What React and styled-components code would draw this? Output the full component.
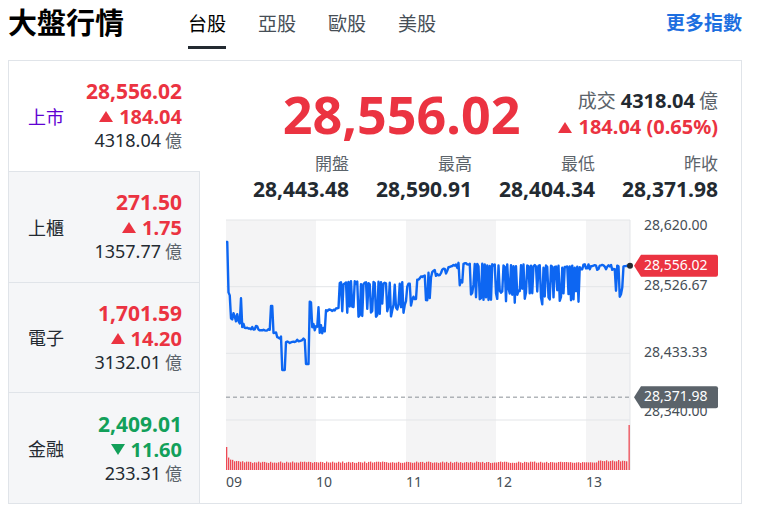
import React from 'react';
import styled, { createGlobalStyle } from 'styled-components';

const RED = '#eb3341';
const GREEN = '#12a05a';
const DARK = '#232a31';
const GRAY = '#5b636a';
const LINE = '#e0e4e9';

const GlobalStyle = createGlobalStyle`
  body {
    margin: 0;
    background: #fff;
    color: ${DARK};
    font-family: "Noto Sans", "Noto Sans CJK TC", sans-serif;
  }
`;

const Page = styled.div`
  width: 734px;
  padding: 0 18px 0 8px;
`;

const Header = styled.div`
  display: flex;
  align-items: flex-start;
  height: 60px;
`;

const Title = styled.h1`
  flex: 0 0 180px;
  margin: 0;
  font-size: 29px;
  line-height: 46px;
  font-weight: 700;
  color: #000;
`;

const Tabs = styled.div`
  display: flex;
  gap: 32px;
`;

const Tab = styled.div`
  padding: 11px 0 9px;
  font-size: 19px;
  line-height: 26px;
  color: ${(p) => (p.$active ? '#000' : '#464e56')};
  border-bottom: 3px solid ${(p) => (p.$active ? DARK : 'transparent')};
`;

const MoreLink = styled.a`
  margin-left: auto;
  font-size: 19px;
  line-height: 46px;
  font-weight: 700;
  color: #1d6fe0;
  text-decoration: none;
`;

const Card = styled.div`
  display: flex;
  height: 444px;
  box-sizing: border-box;
  border: 1px solid ${LINE};
`;

const Sidebar = styled.div`
  display: flex;
  flex-direction: column;
  width: 191px;
  flex: none;
`;

const MarketItem = styled.div`
  flex: 1;
  display: flex;
  align-items: center;
  justify-content: space-between;
  padding: 0 17px 0 19px;
  background: ${(p) => (p.$active ? '#fff' : '#f5f6f8')};
  border-top: ${(p) => (p.$first ? 'none' : `1px solid ${LINE}`)};
  border-right: 1px solid ${(p) => (p.$active ? '#fff' : LINE)};
`;

const ItemLabel = styled.div`
  font-size: 18px;
  color: ${(p) => (p.$active ? '#6001d2' : DARK)};
`;

const ItemValues = styled.div`
  display: flex;
  flex-direction: column;
  align-items: flex-end;
`;

const Price = styled.div`
  font-size: 21px;
  line-height: 25px;
  font-weight: 700;
  color: ${(p) => (p.$down ? GREEN : RED)};
`;

const ChangeRow = styled.div`
  display: flex;
  align-items: center;
  font-size: 20px;
  line-height: ${(p) => (p.$tall ? 26 : 25)}px;
  font-weight: 700;
  color: ${(p) => (p.$down ? GREEN : RED)};
`;

const Triangle = styled.span`
  width: 0;
  height: 0;
  margin-right: 6px;
  border-left: 7px solid transparent;
  border-right: 7px solid transparent;
  ${(p) => (p.$down ? 'border-top' : 'border-bottom')}: 11px solid ${(p) => (p.$down ? GREEN : RED)};
`;

const Volume = styled.div`
  font-size: 18px;
  line-height: 23px;
  color: ${DARK};
`;

const Unit = styled.span`
  margin-left: 4px;
  color: ${GRAY};
  font-size: 17px;
`;

const Main = styled.div`
  flex: 1;
  padding: 23px 25px 0 26px;
`;

const Summary = styled.div`
  display: flex;
  justify-content: flex-end;
  align-items: center;
  gap: 38px;
  height: 60px;
`;

const BigPrice = styled.div`
  font-size: 52px;
  line-height: 60px;
  font-weight: 700;
  color: ${RED};
`;

const SummaryRight = styled.div`
  display: flex;
  flex-direction: column;
  align-items: flex-end;
`;

const TradeLine = styled.div`
  font-size: 19px;
  line-height: 26px;
  color: ${GRAY};
`;

const Strong = styled.b`
  margin: 0 4px 0 5px;
  font-size: 20px;
  color: ${DARK};
`;

const Stats = styled.div`
  display: grid;
  grid-template-columns: repeat(4, 1fr);
  margin-top: 8px;
`;

const Stat = styled.div`
  display: flex;
  flex-direction: column;
  align-items: flex-end;
`;

const StatLabel = styled.div`
  font-size: 17px;
  line-height: 24px;
  color: ${GRAY};
`;

const StatValue = styled.div`
  font-size: 21px;
  line-height: 26px;
  font-weight: 700;
  color: ${DARK};
`;

const ChartSvg = styled.svg`
  display: block;
  margin-top: 9px;
  overflow: visible;
`;

const markets = [
  { name: '上市', price: '28,556.02', change: '184.04', volume: '4318.04' },
  { name: '上櫃', price: '271.50', change: '1.75', volume: '1357.77' },
  { name: '電子', price: '1,701.59', change: '14.20', volume: '3132.01' },
  { name: '金融', price: '2,409.01', change: '11.60', volume: '233.31', down: true },
];

const stats = [
  ['開盤', '28,443.48'],
  ['最高', '28,590.91'],
  ['最低', '28,404.34'],
  ['昨收', '28,371.98'],
];

function rng(seed) {
  return () => {
    seed = (seed + 0x6d2b79f5) | 0;
    let t = Math.imul(seed ^ (seed >>> 15), 1 | seed);
    t = (t + Math.imul(t ^ (t >>> 7), 61 | t)) ^ t;
    return ((t ^ (t >>> 14)) >>> 0) / 4294967296;
  };
}

// [x0, x1, hi0, hi1, lo0, lo1, flip, jitter]
const segs = [
  [0, 1.5, 22, 22, 22, 22, 0, 0],
  [1.5, 4, 70, 76, 70, 76, 0, 0],
  [4, 16, 74, 80, 98, 106, 0.55, 3],
  [16, 44, 104, 110, 108, 112, 0.3, 3],
  [44, 47, 86, 86, 86, 86, 0, 0],
  [47, 56, 112, 116, 116, 120, 0.3, 2],
  [56, 59, 150, 150, 150, 150, 0, 0],
  [59, 80, 122, 118, 124, 120, 0.3, 2],
  [80, 83, 144, 144, 144, 144, 0, 0],
  [83, 100, 82, 90, 108, 118, 0.45, 3],
  [100, 113, 86, 88, 92, 90, 0.3, 2],
  [113, 180, 62, 64, 98, 96, 0.6, 4],
  [180, 205, 66, 52, 88, 80, 0.25, 3],
  [205, 232, 52, 44, 58, 50, 0.3, 2],
  [232, 250, 43, 44, 70, 78, 0.5, 2],
  [250, 355, 45, 47, 82, 86, 0.62, 3],
  [355, 390, 45, 46, 50, 50, 0.3, 2],
  [390, 398, 46, 46, 80, 80, 0.5, 1],
  [398, 405, 46, 46, 46, 46, 0, 1],
];

const PLOT_W = 404;
const yOf = (v) => ((28620 - v) / 280) * 200;
const LAST_Y = yOf(28556.02);
const PREV_Y = yOf(28371.98);

function buildLine() {
  const r = rng(29);
  const pts = [];
  let low = false;
  for (let x = 0; x < PLOT_W; x += 1.25) {
    const s = segs.find((g) => x >= g[0] && x < g[1]) || segs[segs.length - 1];
    const k = (x - s[0]) / (s[1] - s[0]);
    const hi = s[2] + (s[3] - s[2]) * k;
    const lo = s[4] + (s[5] - s[4]) * k;
    if (r() < s[6]) low = !low;
    const y = low ? lo - r() * (lo - hi) * 0.4 : hi + (r() - 0.5) * s[7];
    pts.push(`${x.toFixed(2)},${y.toFixed(1)}`);
  }
  pts.push(`${PLOT_W},${LAST_Y.toFixed(1)}`);
  return pts.join(' ');
}

function buildBars() {
  const r = rng(5);
  const bars = [];
  for (let x = 0; x < PLOT_W - 2; x += 2) {
    let h = 7 + 6 * Math.exp(-x / 6) + r() * 1.5;
    if (x < 2) h = 23;
    if (x > 370) h += 1.5;
    bars.push([x, h]);
  }
  bars.push([PLOT_W - 1.5, 45]);
  return bars;
}

const linePoints = buildLine();
const bars = buildBars();

const yLabels = [
  ['28,620.00', 6],
  ['28,526.67', 66.7],
  ['28,433.33', 133.3],
  ['28,340.00', 192],
];

function Tag({ y, color, text }) {
  return (
    <g>
      <path
        d={`M${PLOT_W + 4} ${y} L${PLOT_W + 11} ${y - 11} H${PLOT_W + 86} a2 2 0 0 1 2 2 V${y + 9} a2 2 0 0 1 -2 2 H${PLOT_W + 11} Z`}
        fill={color}
      />
      <text x={PLOT_W + 14} y={y + 0.5} fill="#fff" fontSize="14" dominantBaseline="middle">
        {text}
      </text>
    </g>
  );
}

function Chart() {
  const bandFill = '#f4f4f5';
  return (
    <ChartSvg width="492" height="282" fontFamily='"Noto Sans", sans-serif'>
      <g transform="translate(0,9)">
        <rect x="0" y="0" width="90" height="250" fill={bandFill} />
        <rect x="180" y="0" width="90" height="250" fill={bandFill} />
        <rect x="360" y="0" width={PLOT_W - 360} height="250" fill={bandFill} />
        {[0, 66.7, 133.3, 200].map((y) => (
          <line key={y} x1="0" x2={PLOT_W} y1={y} y2={y} stroke="#e3e5e8" strokeWidth="1" />
        ))}
        <line x1={PLOT_W} x2={PLOT_W} y1="0" y2="250" stroke="#e3e5e8" />
        <line x1="0" x2={PLOT_W} y1={PREV_Y} y2={PREV_Y} stroke="#8a9096" strokeDasharray="4 3" />
        {bars.map(([x, h]) => (
          <rect key={x} x={x} y={250 - h} width="1.3" height={h} fill="#ee4a55" />
        ))}
        <polyline points={linePoints} fill="none" stroke="#0d66f2" strokeWidth="2.4" strokeLinejoin="round" />
        <circle cx={PLOT_W} cy={LAST_Y} r="3" fill="#232a31" />
        {yLabels.map(([t, y]) => (
          <text key={t} x={PLOT_W + 14} y={y} fill="#464e56" fontSize="14" dominantBaseline="middle">
            {t}
          </text>
        ))}
        <Tag y={LAST_Y} color="#eb3341" text="28,556.02" />
        <Tag y={PREV_Y} color="#5b636a" text="28,371.98" />
        {['09', '10', '11', '12', '13'].map((t, i) => (
          <text key={t} x={i * 90} y="263" fill="#464e56" fontSize="14" dominantBaseline="middle">
            {t}
          </text>
        ))}
      </g>
    </ChartSvg>
  );
}

export default function App() {
  return (
    <Page>
      <GlobalStyle />
      <Header>
        <Title>大盤行情</Title>
        <Tabs>
          <Tab $active>台股</Tab>
          <Tab>亞股</Tab>
          <Tab>歐股</Tab>
          <Tab>美股</Tab>
        </Tabs>
        <MoreLink href="#">更多指數</MoreLink>
      </Header>
      <Card>
        <Sidebar>
          {markets.map((m, i) => (
            <MarketItem key={m.name} $active={i === 0} $first={i === 0}>
              <ItemLabel $active={i === 0}>{m.name}</ItemLabel>
              <ItemValues>
                <Price $down={m.down}>{m.price}</Price>
                <ChangeRow $down={m.down}>
                  <Triangle $down={m.down} />
                  {m.change}
                </ChangeRow>
                <Volume>
                  {m.volume}
                  <Unit>億</Unit>
                </Volume>
              </ItemValues>
            </MarketItem>
          ))}
        </Sidebar>
        <Main>
          <Summary>
            <BigPrice>28,556.02</BigPrice>
            <SummaryRight>
              <TradeLine>
                成交<Strong>4318.04</Strong>億
              </TradeLine>
              <ChangeRow $tall>
                <Triangle />
                184.04 (0.65%)
              </ChangeRow>
            </SummaryRight>
          </Summary>
          <Stats>
            {stats.map(([label, value]) => (
              <Stat key={label}>
                <StatLabel>{label}</StatLabel>
                <StatValue>{value}</StatValue>
              </Stat>
            ))}
          </Stats>
          <Chart />
        </Main>
      </Card>
    </Page>
  );
}
